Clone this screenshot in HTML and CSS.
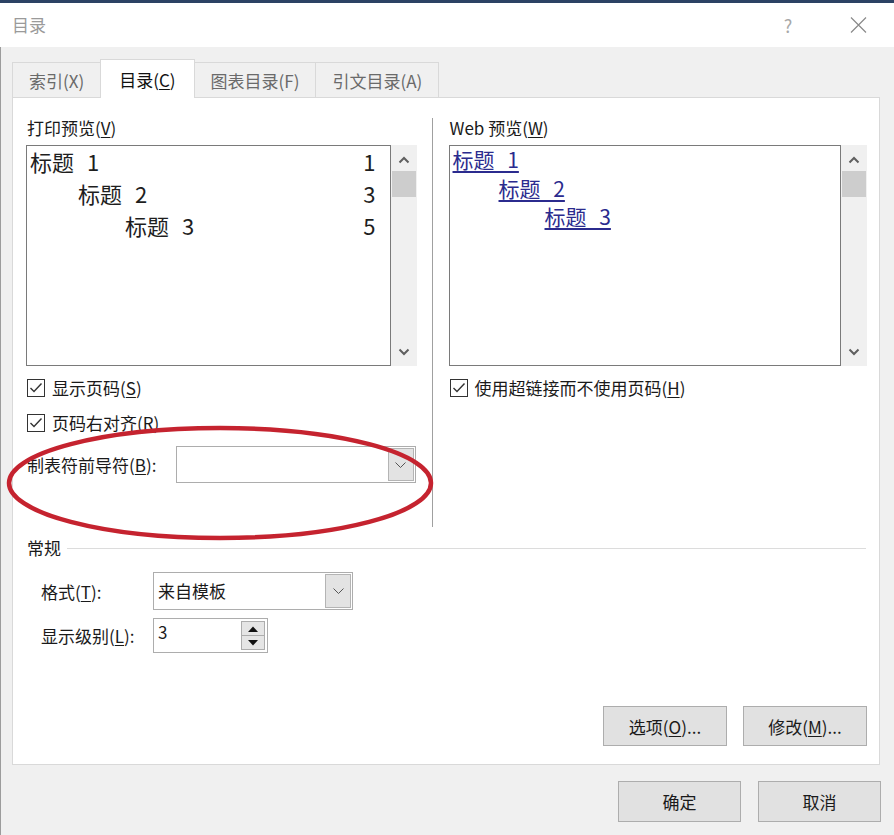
FILE: index.html
```html
<!DOCTYPE html>
<html lang="zh-CN">

<head>
    <meta charset="UTF-8">
    <meta name="viewport" content="width=device-width, initial-scale=1.0">
    <title>目录</title>
    <link rel="stylesheet" href="styles.css">
</head>

<body>
    <div class="window-top"></div>
    <div class="titlebar">
        <span class="title">目录</span>
        <span class="help">?</span>
        <span class="close">
            <svg width="17" height="16" viewBox="0 0 17 16">
                <path d="M1 0.5 L16 15.5 M16 0.5 L1 15.5" stroke="#8a8a8a" stroke-width="1.2" fill="none" />
            </svg>
        </span>
    </div>

    <div class="tabs">
        <div class="tab">索引(X)</div>
        <div class="tab active">目录(<u>C</u>)</div>
        <div class="tab">图表目录(F)</div>
        <div class="tab">引文目录(A)</div>
    </div>

    <div class="panel">
        <div class="previews">
            <div class="col col-print">
                <div class="label">打印预览(<u>V</u>)</div>
                <div class="preview">
                    <div class="preview-list">
                        <div class="toc-row"><span class="toc-text">标题 1</span><span>1</span></div>
                        <div class="toc-row lvl2"><span class="toc-text">标题 2</span><span>3</span></div>
                        <div class="toc-row lvl3"><span class="toc-text">标题 3</span><span>5</span></div>
                    </div>
                    <div class="scrollbar">
                        <div class="sb-btn up">
                            <svg width="12" height="8" viewBox="0 0 12 8"><polyline points="1.5,6.5 6,2 10.5,6.5" stroke="#5f5f5f" stroke-width="2" fill="none" /></svg>
                        </div>
                        <div class="sb-thumb"></div>
                        <div class="sb-track"></div>
                        <div class="sb-btn down">
                            <svg width="12" height="8" viewBox="0 0 12 8"><polyline points="1.5,1.5 6,6 10.5,1.5" stroke="#5f5f5f" stroke-width="2" fill="none" /></svg>
                        </div>
                    </div>
                </div>

                <div class="check">
                    <span class="box"><svg width="14" height="12" viewBox="0 0 14 12"><polyline points="1.5,6 5,9.5 12.5,1.5" stroke="#333" stroke-width="1.4" fill="none" /></svg></span>
                    显示页码(<u>S</u>)
                </div>
                <div class="check">
                    <span class="box"><svg width="14" height="12" viewBox="0 0 14 12"><polyline points="1.5,6 5,9.5 12.5,1.5" stroke="#333" stroke-width="1.4" fill="none" /></svg></span>
                    页码右对齐(<u>R</u>)
                </div>
                <div class="field">
                    <span class="field-name">制表符前导符(<u>B</u>):</span>
                    <div class="combo leader">
                        <span class="combo-value"></span>
                        <span class="drop">
                            <svg width="11" height="6" viewBox="0 0 11 6"><polyline points="0.5,0.5 5.5,5.5 10.5,0.5" stroke="#555" stroke-width="1" fill="none" /></svg>
                        </span>
                    </div>
                </div>
            </div>

            <div class="divider"></div>

            <div class="col col-web">
                <div class="label">Web 预览(<u>W</u>)</div>
                <div class="preview">
                    <div class="preview-list web-list">
                        <div class="web-row"><a>标题 1</a></div>
                        <div class="web-row lvl2"><a>标题 2</a></div>
                        <div class="web-row lvl3"><a>标题 3</a></div>
                    </div>
                    <div class="scrollbar">
                        <div class="sb-btn up">
                            <svg width="12" height="8" viewBox="0 0 12 8"><polyline points="1.5,6.5 6,2 10.5,6.5" stroke="#5f5f5f" stroke-width="2" fill="none" /></svg>
                        </div>
                        <div class="sb-thumb"></div>
                        <div class="sb-track"></div>
                        <div class="sb-btn down">
                            <svg width="12" height="8" viewBox="0 0 12 8"><polyline points="1.5,1.5 6,6 10.5,1.5" stroke="#5f5f5f" stroke-width="2" fill="none" /></svg>
                        </div>
                    </div>
                </div>

                <div class="check">
                    <span class="box"><svg width="14" height="12" viewBox="0 0 14 12"><polyline points="1.5,6 5,9.5 12.5,1.5" stroke="#333" stroke-width="1.4" fill="none" /></svg></span>
                    使用超链接而不使用页码(<u>H</u>)
                </div>
            </div>
        </div>

        <div class="general-head">
            <span>常规</span>
            <span class="rule"></span>
        </div>
        <div class="form-row">
            <span class="form-name">格式(<u>T</u>):</span>
            <div class="combo format">
                <span class="combo-value">来自模板</span>
                <span class="drop">
                    <svg width="11" height="6" viewBox="0 0 11 6"><polyline points="0.5,0.5 5.5,5.5 10.5,0.5" stroke="#555" stroke-width="1" fill="none" /></svg>
                </span>
            </div>
        </div>
        <div class="form-row">
            <span class="form-name">显示级别(<u>L</u>):</span>
            <div class="spinner">
                <span class="spin-value">3</span>
                <span class="spin">
                    <span class="spin-up"><svg width="10" height="6" viewBox="0 0 10 6"><polygon points="0,6 5,0.5 10,6" fill="#111" /></svg></span>
                    <span class="spin-down"><svg width="10" height="6" viewBox="0 0 10 6"><polygon points="0,0 5,5.5 10,0" fill="#111" /></svg></span>
                </span>
            </div>
        </div>

        <div class="panel-buttons">
            <button class="btn">选项(<u>O</u>)...</button>
            <button class="btn">修改(<u>M</u>)...</button>
        </div>

        <!-- red marker drawn over the leader field -->
        <svg class="marker" width="430" height="117" viewBox="0 0 430 117">
            <ellipse cx="215" cy="59" rx="211" ry="55" stroke="#c5232f" stroke-width="4.5" fill="none" />
        </svg>
    </div>

    <div class="footer">
        <button class="btn big">确定</button>
        <button class="btn big">取消</button>
    </div>
</body>

</html>
```

FILE: styles.css
```css
* {
    box-sizing: border-box;
}

body {
    margin: 0;
    width: 894px;
    height: 835px;
    overflow: hidden;
    background-color: #f0f0f0;
    box-shadow: inset 1px 0 #9c9c9c;
    font-family: "Noto Sans CJK SC", "Noto Sans", sans-serif;
    font-size: 17px;
    color: #1a1a1a;
}

u {
    text-underline-offset: 2px;
}

.window-top {
    height: 3px;
    background-color: #2c4264;
}

/* title bar */
.titlebar {
    height: 44px;
    background-color: #fff;
    display: flex;
    align-items: center;
    padding-left: 12px;
    color: #9a9a9a;
}

.titlebar .title {
    flex: 1;
    line-height: 22px;
}

.help {
    width: 20px;
    text-align: center;
    font-size: 18px;
    color: #a8a8a8;
    margin-right: 52px;
}

.close {
    display: flex;
    margin-right: 27px;
}

/* tabs */
.tabs {
    display: flex;
    align-items: flex-end;
    height: 38px;
    margin-top: 12px;
    padding-left: 12px;
}

.tab {
    height: 35px;
    padding: 0 16px;
    border: 1px solid #d9d9d9;
    border-bottom: none;
    margin-right: -1px;
    background-color: #f0f0f0;
    color: #6a6a6a;
    line-height: 36px;
}

.tab.active {
    position: relative;
    z-index: 1;
    height: 39px;
    margin-bottom: -1px;
    padding: 0 18px;
    background-color: #fff;
    color: #111;
    line-height: 40px;
}

/* main panel */
.panel {
    position: relative;
    height: 668px;
    margin: 0 14px 0 12px;
    padding: 19px 12px 18px 13px;
    background-color: #fff;
    border: 1px solid #d9d9d9;
    display: flex;
    flex-direction: column;
}

.previews {
    display: flex;
    height: 410px;
}

.col-print {
    width: 391px;
}

.col-web {
    width: 419px;
}

.divider {
    width: 1px;
    margin: 1px 16px 0 15px;
    background-color: #a0a0a0;
}

.label {
    height: 22px;
    line-height: 22px;
    margin-bottom: 6px;
    padding-left: 1px;
}

.preview {
    display: flex;
    height: 221px;
}

.preview-list {
    flex: 1;
    border: 1px solid #7a7a7a;
    padding: 0 14px 0 3px;
}

.toc-row {
    display: flex;
    justify-content: space-between;
    height: 32px;
    line-height: 30px;
    font-size: 22px;
    color: #1e1e1e;
}

.toc-text {
    word-spacing: 8px;
}

.toc-row.lvl2 {
    padding-left: 48px;
}

.toc-row.lvl3 {
    padding-left: 95px;
}

.web-row {
    height: 28.5px;
    line-height: 26px;
    font-size: 21px;
}

.web-row a {
    color: #2b2b8e;
    text-decoration: underline;
    text-underline-offset: 3px;
    word-spacing: 8px;
}

.web-row.lvl2 {
    padding-left: 46px;
}

.web-row.lvl3 {
    padding-left: 92px;
}

/* scrollbar */
.scrollbar {
    width: 26px;
    background-color: #f0f0f0;
    display: flex;
    flex-direction: column;
    align-items: center;
}

.sb-btn {
    width: 100%;
    height: 26px;
    display: flex;
    align-items: center;
    justify-content: center;
}

.sb-btn.up {
    padding-top: 4px;
}

.sb-btn.down {
    padding-bottom: 2px;
}

.sb-thumb {
    width: 24px;
    height: 26px;
    background-color: #cdcdcd;
}

.sb-track {
    flex: 1;
}

/* checkboxes */
.check {
    display: flex;
    align-items: center;
    height: 26px;
    margin-top: 9px;
    line-height: 26px;
}

.box {
    width: 18px;
    height: 18px;
    margin: 0 7px 0 1px;
    border: 1px solid #333;
    background-color: #fff;
    display: flex;
    align-items: center;
    justify-content: center;
}

/* combo boxes */
.field {
    display: flex;
    align-items: center;
    margin-top: 10px;
}

.field-name {
    flex: 1;
    padding-left: 1px;
}

.combo {
    display: flex;
    height: 37px;
    border: 1px solid #adadad;
    background-color: #fff;
}

.combo.leader {
    width: 240px;
    margin-right: 1px;
}

.combo.format {
    width: 200px;
    height: 38px;
}

.combo-value {
    flex: 1;
    padding-left: 4px;
    line-height: 35px;
}

.drop {
    width: 26px;
    margin: 1px;
    border: 1px solid #b4b4b4;
    background-color: #e3e3e3;
    display: flex;
    align-items: center;
    justify-content: center;
}

/* general section */
.general-head {
    display: flex;
    align-items: center;
    margin-top: 10px;
    padding-left: 1px;
    line-height: 22px;
}

.rule {
    flex: 1;
    height: 1px;
    margin: 0 1px 0 6px;
    background-color: #dcdcdc;
}

.form-row {
    display: flex;
    align-items: center;
    margin-top: 8px;
    padding-left: 15px;
}

.general-head + .form-row {
    margin-top: 13px;
}

.form-name {
    width: 112px;
}

.spinner {
    display: flex;
    width: 115px;
    height: 35px;
    border: 1px solid #adadad;
}

.spin-value {
    flex: 1;
    padding-left: 4px;
    line-height: 26px;
}

.spin {
    width: 24px;
    margin: 2px 2px 2px 0;
    border: 1px solid #adadad;
    display: flex;
    flex-direction: column;
}

.spin-up,
.spin-down {
    flex: 1;
    background-color: #e5e5e5;
    display: flex;
    align-items: center;
    justify-content: center;
}

.spin-up {
    border-bottom: 1px solid #adadad;
}

/* buttons */
.btn {
    width: 124px;
    height: 40px;
    padding: 0;
    border: 1px solid #adadad;
    background-color: #e1e1e1;
    font: inherit;
    color: #1a1a1a;
}

.btn.big {
    width: 123px;
    height: 41px;
}

.panel-buttons {
    margin-top: auto;
    display: flex;
    justify-content: flex-end;
    gap: 16px;
}

.footer {
    display: flex;
    justify-content: flex-end;
    gap: 17px;
    padding: 16px 13px 0 0;
}

.marker {
    position: absolute;
    left: -8px;
    top: 326px;
    pointer-events: none;
}
```
